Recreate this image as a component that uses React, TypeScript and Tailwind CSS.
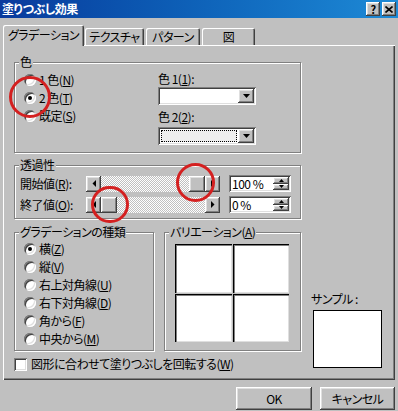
import React from "react";

// classic 3D edges
const raised =
  "bg-[#c0c0c0] shadow-[inset_-1px_-1px_#404040,inset_1px_1px_#ffffff,inset_-2px_-2px_#808080,inset_2px_2px_#dfdfdf]";
const sunken =
  "bg-white shadow-[inset_1px_1px_#808080,inset_-1px_-1px_#ffffff,inset_2px_2px_#404040,inset_-2px_-2px_#dfdfdf]";
const tab =
  "rounded-t-[2px] shadow-[inset_1px_1px_#ffffff,inset_-1px_0_#404040,inset_-2px_0_#808080]";

function Key({ k }: { k: string }) {
  return <span className="underline underline-offset-[1px]">{k}</span>;
}

function Group({
  title,
  className,
  children,
}: {
  title: React.ReactNode;
  className: string;
  children?: React.ReactNode;
}) {
  return (
    <div className={`border border-[#808080] shadow-[inset_1px_1px_0_#ffffff,1px_1px_0_#ffffff] ${className}`}>
      <div className="-mt-[8px] ml-[4px] w-fit bg-[#c0c0c0] px-[1px] leading-[14px]">{title}</div>
      {children}
    </div>
  );
}

function Radio({ checked, children }: { checked?: boolean; children: React.ReactNode }) {
  return (
    <div className="flex h-[18px] items-center gap-[3px]">
      <span className="flex h-[12px] w-[12px] items-center justify-center rounded-full bg-white shadow-[inset_1px_1px_#808080,inset_-1px_-1px_#ffffff,inset_2px_2px_#404040,inset_-2px_-2px_#dfdfdf]">
        {checked && <span className="h-[4px] w-[4px] rounded-full bg-black" />}
      </span>
      <span>{children}</span>
    </div>
  );
}

function Arrow({ dir }: { dir: "left" | "right" | "up" | "down" }) {
  if (dir === "left")
    return (
      <svg width="4" height="7" viewBox="0 0 4 7">
        <polygon points="4,0 4,7 0.5,3.5" fill="#000" />
      </svg>
    );
  if (dir === "right")
    return (
      <svg width="4" height="7" viewBox="0 0 4 7">
        <polygon points="0,0 0,7 3.5,3.5" fill="#000" />
      </svg>
    );
  if (dir === "up")
    return (
      <svg width="5" height="3" viewBox="0 0 5 3">
        <polygon points="0,3 5,3 2.5,0" fill="#000" />
      </svg>
    );
  return (
    <svg width="7" height="4" viewBox="0 0 7 4">
      <polygon points="0,0 7,0 3.5,4" fill="#000" />
    </svg>
  );
}

function ScrollBtn({ dir }: { dir: "left" | "right" }) {
  return (
    <div className={`flex h-[16px] w-[15px] shrink-0 items-center justify-center ${raised}`}>
      <Arrow dir={dir} />
    </div>
  );
}

function Slider({ atEnd }: { atEnd: boolean }) {
  const track = (
    <div className="h-[16px] flex-1 bg-[repeating-conic-gradient(#ffffff_0_25%,#c0c0c0_0_50%)] bg-[length:2px_2px]" />
  );
  const thumb = <div className={`h-[16px] w-[16px] shrink-0 ${raised}`} />;
  return (
    <div className="flex h-[16px] w-[134px] items-center">
      <ScrollBtn dir="left" />
      {atEnd ? track : thumb}
      {atEnd ? thumb : track}
      <ScrollBtn dir="right" />
    </div>
  );
}

function Spin({ value }: { value: string }) {
  return (
    <div className={`ml-[9px] flex h-[17px] w-[62px] items-center pl-[3px] pr-[2px] ${sunken}`}>
      <span className="flex-1 leading-[13px]">{value}</span>
      <div className="flex h-[13px] w-[16px] flex-col">
        <div className={`flex flex-1 items-center justify-center ${raised}`}>
          <Arrow dir="up" />
        </div>
        <div className={`flex flex-1 items-center justify-center ${raised}`}>
          <svg width="5" height="3" viewBox="0 0 5 3">
            <polygon points="0,0 5,0 2.5,3" fill="#000" />
          </svg>
        </div>
      </div>
    </div>
  );
}

function Dropdown({ focused }: { focused?: boolean }) {
  return (
    <div className={`flex h-[18px] w-[98px] items-center p-[2px] ${sunken}`}>
      {focused ? (
        <div className="m-[1px] flex-1 self-stretch border border-dotted border-black bg-[#eeeeee]" />
      ) : (
        <div className="flex-1 self-stretch" />
      )}
      <div className={`flex h-[14px] w-[16px] items-center justify-center ${raised}`}>
        <Arrow dir="down" />
      </div>
    </div>
  );
}

const box =
  "bg-white shadow-[inset_1px_1px_#000000,inset_2px_2px_#808080,inset_-1px_-1px_#dfdfdf]";

export default function App() {
  return (
    <div className="relative h-[411px] w-[398px] overflow-hidden bg-[#c0c0c0] font-['Noto_Sans_CJK_JP','Noto_Sans',sans-serif] text-[12px] leading-[14px] tracking-[-0.5px] text-black [font-feature-settings:'palt']">
      {/* title bar */}
      <div className="flex h-[18px] items-center bg-linear-to-r from-[#0a3a9c] to-[#1e8ad6] pl-[2px] pr-[2px]">
        <span className="flex-1 text-[12px] font-bold text-white">塗りつぶし効果</span>
        <div className="flex gap-[2px]">
          <div className={`flex h-[14px] w-[14px] items-center justify-center text-[11px] font-bold leading-none ${raised}`}>
            ?
          </div>
          <div className={`flex h-[14px] w-[14px] items-center justify-center ${raised}`}>
            <svg width="8" height="7" viewBox="0 0 8 7">
              <path d="M0.5 0.5 L7.5 6.5 M7.5 0.5 L0.5 6.5" stroke="#000" strokeWidth="1.6" />
            </svg>
          </div>
        </div>
      </div>

      {/* tabs */}
      <div className="mt-[7px] flex h-[20px] items-end gap-[1px] pl-[3px]">
        <div className={`relative z-10 -mb-[1px] flex h-[21px] w-[81px] items-center justify-center bg-[#c0c0c0] pb-[1px] ${tab}`}>
          グラデーション
        </div>
        <div className={`flex h-[17px] w-[59px] items-center justify-center ${tab}`}>テクスチャ</div>
        <div className={`ml-[1px] flex h-[17px] w-[54px] items-center justify-center ${tab}`}>パターン</div>
        <div className={`ml-[1px] flex h-[17px] w-[53px] items-center justify-center ${tab}`}>図</div>
      </div>

      {/* tab panel */}
      <div className="mx-[3px] h-[335px] pl-[11px] pt-[17px] shadow-[inset_1px_1px_#ffffff,inset_-1px_-1px_#404040,inset_-2px_-2px_#808080]">
        <Group title="色" className="h-[91px] w-[287px]">
          <div className="flex">
            <div className="w-[143px] pl-[9px] pt-[2px]">
              <Radio>
                1 色(<Key k="N" />)
              </Radio>
              <Radio checked>
                2 色(<Key k="T" />)
              </Radio>
              <Radio>
                既定(<Key k="S" />)
              </Radio>
            </div>
            <div className="pt-[3px]">
              <div className="h-[14px]">
                色 1(<Key k="1" />):
              </div>
              <div className="mt-[1px]">
                <Dropdown />
              </div>
              <div className="mt-[5px] h-[14px]">
                色 2(<Key k="2" />):
              </div>
              <div className="mt-[3px]">
                <Dropdown focused />
              </div>
            </div>
          </div>
        </Group>

        <Group title="透過性" className="mt-[12px] h-[54px] w-[287px]">
          <div className="mt-[3px] flex h-[17px] items-center pl-[5px]">
            <span className="w-[66px]">
              開始値(<Key k="R" />):
            </span>
            <Slider atEnd />
            <Spin value="100 %" />
          </div>
          <div className="mt-[4px] flex h-[17px] items-center pl-[5px]">
            <span className="w-[66px]">
              終了値(<Key k="O" />):
            </span>
            <Slider atEnd={false} />
            <Spin value="0 %" />
          </div>
        </Group>

        <div className="mt-[13px] flex items-start">
          <div>
            <div className="flex">
              <Group title="グラデーションの種類" className="h-[119px] w-[140px]">
                <div className="pl-[9px] pt-[1px]">
                  <Radio checked>
                    横(<Key k="Z" />)
                  </Radio>
                  <Radio>
                    縦(<Key k="V" />)
                  </Radio>
                  <Radio>
                    右上対角線(<Key k="U" />)
                  </Radio>
                  <Radio>
                    右下対角線(<Key k="D" />)
                  </Radio>
                  <Radio>
                    角から(<Key k="F" />)
                  </Radio>
                  <Radio>
                    中央から(<Key k="M" />)
                  </Radio>
                </div>
              </Group>

              <Group
                title={
                  <>
                    バリエーション(<Key k="A" />)
                  </>
                }
                className="ml-[10px] h-[119px] w-[137px]"
              >
                <div className="ml-[10px] mt-[5px] grid w-fit grid-cols-[57px_56px] grid-rows-[49px_48px] gap-[1px]">
                  <div className={box} />
                  <div className={box} />
                  <div className={box} />
                  <div className={box} />
                </div>
              </Group>
            </div>

            <div className="mt-[6px] flex items-center gap-[4px]">
              <div className={`h-[13px] w-[13px] ${sunken}`} />
              <span>
                図形に合わせて塗りつぶしを回転する(<Key k="W" />)
              </span>
            </div>
          </div>

          <div className="ml-[10px] mt-[60px]">
            <div className="h-[14px]">サンプル :</div>
            <div className="ml-[2px] mt-[4px] h-[58px] w-[69px] border border-black bg-white" />
          </div>
        </div>
      </div>

      {/* buttons */}
      <div className="mt-[7px] flex justify-end gap-[8px] pr-[3px]">
        <button className={`flex h-[23px] w-[76px] items-center justify-center ${raised}`}>OK</button>
        <button className={`flex h-[23px] w-[75px] items-center justify-center ${raised}`}>キャンセル</button>
      </div>

      {/* red annotation circles */}
      <div className="pointer-events-none absolute left-[9px] top-[76px] h-[42px] w-[42px] rounded-full border-[3px] border-[#d42020]" />
      <div className="pointer-events-none absolute left-[176px] top-[163px] h-[39px] w-[39px] rounded-full border-[3px] border-[#d42020]" />
      <div className="pointer-events-none absolute left-[91px] top-[186px] h-[37px] w-[38px] rounded-full border-[3px] border-[#d42020]" />
    </div>
  );
}
